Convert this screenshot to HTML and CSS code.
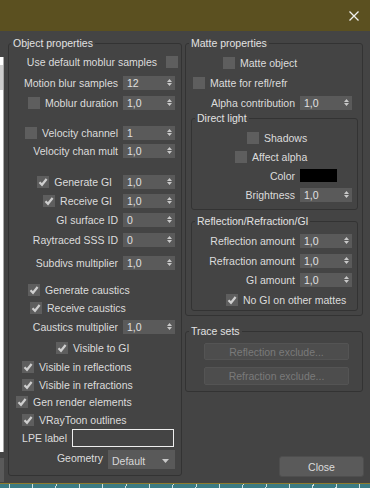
FILE: index.html
```html
<!DOCTYPE html>
<html lang="en">
<head>
  <meta charset="UTF-8" />
  <title>Object properties</title>
  <link rel="stylesheet" href="styles.css">
</head>
<body>

  <div class="titlebar">
    <svg class="close-x" width="10" height="10" viewBox="0 0 10 10"><path d="M0.5 0.5L9.5 9.5M9.5 0.5L0.5 9.5"/></svg>
  </div>

  <div class="window">

    <div class="edge">
      <div class="edge-panel"><div class="edge-thumb"></div></div>
      <div class="edge-btn"></div>
    </div>

    <fieldset class="group obj">
      <legend>Object properties</legend>

      <div class="row end">
        <span>Use default moblur samples</span><span class="cb over"></span>
      </div>
      <div class="row end mt4">
        <span>Motion blur samples</span>
        <span class="spin">12<svg width="5" height="9" viewBox="0 0 5 9"><path d="M0 4L2.5 1L5 4ZM0 5L2.5 8L5 5Z"/></svg></span>
      </div>
      <div class="row end mt3">
        <span class="cb"></span><span>Moblur duration</span>
        <span class="spin">1,0<svg width="5" height="9" viewBox="0 0 5 9"><path d="M0 4L2.5 1L5 4ZM0 5L2.5 8L5 5Z"/></svg></span>
      </div>

      <div class="row end mt13">
        <span class="cb"></span><span>Velocity channel</span>
        <span class="spin">1<svg width="5" height="9" viewBox="0 0 5 9"><path d="M0 4L2.5 1L5 4ZM0 5L2.5 8L5 5Z"/></svg></span>
      </div>
      <div class="row end mt1">
        <span>Velocity chan mult</span>
        <span class="spin">1,0<svg width="5" height="9" viewBox="0 0 5 9"><path d="M0 4L2.5 1L5 4ZM0 5L2.5 8L5 5Z"/></svg></span>
      </div>

      <div class="row end mt14">
        <span class="cb on"><svg viewBox="0 0 12 12"><path d="M2.5 6.2L5 8.8L9.6 3"/></svg></span><span class="far">Generate GI</span>
        <span class="spin">1,0<svg width="5" height="9" viewBox="0 0 5 9"><path d="M0 4L2.5 1L5 4ZM0 5L2.5 8L5 5Z"/></svg></span>
      </div>
      <div class="row end mt2">
        <span class="cb on"><svg viewBox="0 0 12 12"><path d="M2.5 6.2L5 8.8L9.6 3"/></svg></span><span class="far">Receive GI</span>
        <span class="spin">1,0<svg width="5" height="9" viewBox="0 0 5 9"><path d="M0 4L2.5 1L5 4ZM0 5L2.5 8L5 5Z"/></svg></span>
      </div>
      <div class="row end mt2">
        <span>GI surface ID</span>
        <span class="spin">0<svg width="5" height="9" viewBox="0 0 5 9"><path d="M0 4L2.5 1L5 4ZM0 5L2.5 8L5 5Z"/></svg></span>
      </div>
      <div class="row end mt3">
        <span>Raytraced SSS ID</span>
        <span class="spin">0<svg width="5" height="9" viewBox="0 0 5 9"><path d="M0 4L2.5 1L5 4ZM0 5L2.5 8L5 5Z"/></svg></span>
      </div>

      <div class="row end mt6">
        <span>Subdivs multiplier</span>
        <span class="spin">1,0<svg width="5" height="9" viewBox="0 0 5 9"><path d="M0 4L2.5 1L5 4ZM0 5L2.5 8L5 5Z"/></svg></span>
      </div>

      <div class="row in19 mt10">
        <span class="cb on"><svg viewBox="0 0 12 12"><path d="M2.5 6.2L5 8.8L9.6 3"/></svg></span><span>Generate caustics</span>
      </div>
      <div class="row in21 mt1">
        <span class="cb on"><svg viewBox="0 0 12 12"><path d="M2.5 6.2L5 8.8L9.6 3"/></svg></span><span>Receive caustics</span>
      </div>
      <div class="row end mt2">
        <span>Caustics multiplier</span>
        <span class="spin">1,0<svg width="5" height="9" viewBox="0 0 5 9"><path d="M0 4L2.5 1L5 4ZM0 5L2.5 8L5 5Z"/></svg></span>
      </div>
      <div class="row in47 mt4">
        <span class="cb on"><svg viewBox="0 0 12 12"><path d="M2.5 6.2L5 8.8L9.6 3"/></svg></span><span>Visible to GI</span>
      </div>
      <div class="row in13 mt2">
        <span class="cb on"><svg viewBox="0 0 12 12"><path d="M2.5 6.2L5 8.8L9.6 3"/></svg></span><span>Visible in reflections</span>
      </div>
      <div class="row in13 mt1">
        <span class="cb on"><svg viewBox="0 0 12 12"><path d="M2.5 6.2L5 8.8L9.6 3"/></svg></span><span>Visible in refractions</span>
      </div>
      <div class="row in7">
        <span class="cb on"><svg viewBox="0 0 12 12"><path d="M2.5 6.2L5 8.8L9.6 3"/></svg></span><span>Gen render elements</span>
      </div>
      <div class="row in13 mt1">
        <span class="cb on"><svg viewBox="0 0 12 12"><path d="M2.5 6.2L5 8.8L9.6 3"/></svg></span><span>VRayToon outlines</span>
      </div>
      <div class="row end mt1">
        <span>LPE label</span><span class="text-box"></span>
      </div>
      <div class="row end mt4 top">
        <span class="geo">Geometry</span>
        <span class="select">Default<svg width="7" height="4" viewBox="0 0 7 4"><path d="M0 0H7L3.5 4Z"/></svg></span>
      </div>
    </fieldset>

    <div class="side">
      <fieldset class="group matte">
        <legend>Matte properties</legend>
        <div class="row in32">
          <span class="cb"></span><span>Matte object</span>
        </div>
        <div class="row in2 mt3">
          <span class="cb"></span><span>Matte for refl/refr</span>
        </div>
        <div class="row end pr6 mt3">
          <span>Alpha contribution</span>
          <span class="spin">1,0<svg width="5" height="9" viewBox="0 0 5 9"><path d="M0 4L2.5 1L5 4ZM0 5L2.5 8L5 5Z"/></svg></span>
        </div>

        <fieldset class="group sub">
          <legend>Direct light</legend>
          <div class="row in55">
            <span class="cb"></span><span>Shadows</span>
          </div>
          <div class="row in43 mt2">
            <span class="cb"></span><span>Affect alpha</span>
          </div>
          <div class="row end pr15 mt2">
            <span>Color</span><span class="swatch"></span>
          </div>
          <div class="row end mt2">
            <span>Brightness</span>
            <span class="spin">1,0<svg width="5" height="9" viewBox="0 0 5 9"><path d="M0 4L2.5 1L5 4ZM0 5L2.5 8L5 5Z"/></svg></span>
          </div>
        </fieldset>

        <fieldset class="group sub rrg">
          <legend>Reflection/Refraction/GI</legend>
          <div class="row end">
            <span>Reflection amount</span>
            <span class="spin">1,0<svg width="5" height="9" viewBox="0 0 5 9"><path d="M0 4L2.5 1L5 4ZM0 5L2.5 8L5 5Z"/></svg></span>
          </div>
          <div class="row end mt3">
            <span>Refraction amount</span>
            <span class="spin">1,0<svg width="5" height="9" viewBox="0 0 5 9"><path d="M0 4L2.5 1L5 4ZM0 5L2.5 8L5 5Z"/></svg></span>
          </div>
          <div class="row end mt2">
            <span>GI amount</span>
            <span class="spin">1,0<svg width="5" height="9" viewBox="0 0 5 9"><path d="M0 4L2.5 1L5 4ZM0 5L2.5 8L5 5Z"/></svg></span>
          </div>
          <div class="row in34 mt3">
            <span class="cb on"><svg viewBox="0 0 12 12"><path d="M2.5 6.2L5 8.8L9.6 3"/></svg></span><span>No GI on other mattes</span>
          </div>
        </fieldset>
      </fieldset>

      <fieldset class="group trace">
        <legend>Trace sets</legend>
        <button class="dis-btn">Reflection exclude...</button>
        <button class="dis-btn second">Refraction exclude...</button>
      </fieldset>

      <button class="close-btn">Close</button>
    </div>

  </div>

  <div class="ground"></div>

</body>
</html>
```

FILE: styles.css
```css
* {
  box-sizing: border-box;
}
body {
  margin: 0;
  width: 370px;
  height: 488px;
  overflow: hidden;
  background: #444444;
  font-family: "Liberation Sans", Arial, sans-serif;
  font-size: 10.5px;
  line-height: 14px;
  color: #dcdcdc;
}

.titlebar {
  height: 31px;
  background: #5b5020;
  display: flex;
  justify-content: flex-end;
  align-items: center;
  padding-right: 11px;
}

.close-x path {
  stroke: #f0f0f0;
  stroke-width: 1.3;
}

.window {
  height: 452px;
  display: flex;
  align-items: flex-start;
}

/* bits of the window behind, cut off at the left */
.edge {
  width: 4px;
  height: 100%;
  display: flex;
  flex-direction: column;
}
.edge-panel {
  margin-top: 26px;
  height: 395px;
  background: #ffffff;
  border-right: 1px solid #a8a8a8;
  padding-top: 8px;
}
.edge-thumb {
  height: 25px;
  background: #cfcfcf;
}
.edge-btn {
  margin-top: 6px;
  height: 24px;
  background: #5a5a5a;
}

/* group boxes */
.group {
  margin: 0;
  min-width: 0;
  border: 1px solid #333333;
  border-radius: 3px;
}
.group legend {
  padding: 0 2px;
  margin-left: 3px;
  line-height: 14px;
  color: #e2e2e2;
}

.obj {
  width: 174px;
  margin-top: 5px;
  margin-left: 4px;
  padding: 3px 6px 6px 0;
}
.obj legend {
  margin-left: 2px;
}

.side {
  width: 180px;
  height: 100%;
  margin-left: 3px;
  padding-bottom: 6px;
  display: flex;
  flex-direction: column;
  align-items: flex-start;
}

.matte {
  width: 178px;
  margin-top: 5px;
  padding: 4px 4px 4px 5px;
}
.matte > legend {
  margin-left: -2px;
}

.sub {
  width: 100%;
  padding: 4px 5px 6px 0;
}
.rrg {
  margin-top: 4px;
  padding-bottom: 2px;
}

.trace {
  width: 178px;
  margin-top: 8px;
  padding: 5px 0 6px 0;
}
.trace legend {
  margin-left: 3px;
}

/* rows */
.row {
  height: 17px;
  display: flex;
  align-items: center;
  gap: 5px;
  white-space: nowrap;
}
.row.end {
  justify-content: flex-end;
}
.row.top {
  align-items: flex-start;
  height: 19px;
}
.geo {
  margin-top: 1px;
}
.far {
  margin-right: 6px;
}

.mt1 { margin-top: 1px; }
.mt2 { margin-top: 2px; }
.mt3 { margin-top: 3px; }
.mt4 { margin-top: 4px; }
.mt6 { margin-top: 6px; }
.mt10 { margin-top: 10px; }
.mt13 { margin-top: 13px; }
.mt14 { margin-top: 14px; }

.in2 { padding-left: 2px; }
.in7 { padding-left: 7px; }
.in13 { padding-left: 13px; }
.in19 { padding-left: 19px; }
.in21 { padding-left: 21px; }
.in32 { padding-left: 32px; }
.in34 { padding-left: 34px; }
.in43 { padding-left: 43px; }
.in47 { padding-left: 47px; }
.in55 { padding-left: 55px; }
.pr6 { padding-right: 6px; }
.pr15 { padding-right: 15px; }

/* controls */
.cb {
  width: 12px;
  height: 12px;
  flex: none;
  background: #5e5e5e;
}
.cb.over {
  margin-left: 4px;
  margin-right: -3px;
}
.cb svg {
  display: block;
  width: 12px;
  height: 12px;
}
.cb path {
  fill: none;
  stroke: #cfcfcf;
  stroke-width: 2.2;
}

.spin {
  width: 52px;
  height: 14px;
  flex: none;
  background: #5a5a5a;
  display: flex;
  align-items: center;
  justify-content: space-between;
  padding: 0 3px 0 4px;
  color: #e0e0e0;
}
.spin path,
.select path {
  fill: #c8c8c8;
}

.text-box {
  width: 102px;
  height: 18px;
  flex: none;
  margin-right: 1px;
  border: 1px solid #eeeeee;
}

.select {
  width: 67px;
  height: 19px;
  flex: none;
  background: #595959;
  display: flex;
  align-items: center;
  justify-content: space-between;
  padding: 2px 6px 0 4px;
  color: #d8d8d8;
}

.swatch {
  width: 37px;
  height: 13px;
  flex: none;
  background: #000000;
}

/* buttons */
.dis-btn {
  width: 145px;
  height: 17px;
  margin-left: 18px;
  padding: 0;
  background: #4d4d4d;
  border: 1px solid #545454;
  border-radius: 2px;
  font: inherit;
  color: #7a7a7a;
}
.dis-btn.second {
  margin-top: 7px;
  height: 18px;
}

.close-btn {
  margin-top: auto;
  align-self: flex-end;
  margin-right: 1px;
  width: 85px;
  height: 21px;
  padding: 0;
  background: #5a5a5a;
  border: 1px solid #4e4e4e;
  border-radius: 3px;
  font: inherit;
  color: #dcdcdc;
}

/* scene under the dialog */
.ground {
  height: 5px;
  border-top: 1px solid #8e7c2c;
  background: repeating-linear-gradient(100deg, #3c7b83 0 9px, #cfe0e0 9px 10px, #3c7b83 10px 23px);
}
```
